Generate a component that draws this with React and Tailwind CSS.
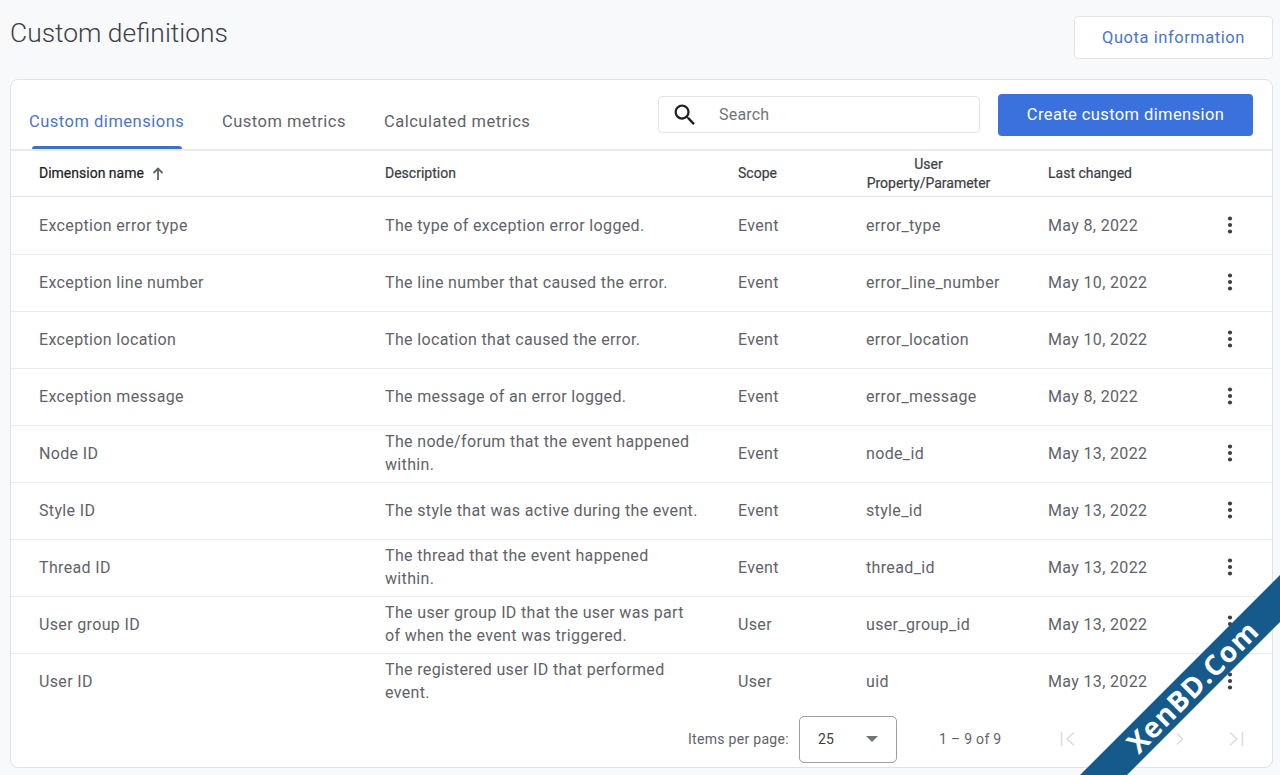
import React from "react";
import { ChevronLeft, ChevronRight } from "lucide-react";

const rows = [
  ["Exception error type", "The type of exception error logged.", "Event", "error_type", "May 8, 2022"],
  ["Exception line number", "The line number that caused the error.", "Event", "error_line_number", "May 10, 2022"],
  ["Exception location", "The location that caused the error.", "Event", "error_location", "May 10, 2022"],
  ["Exception message", "The message of an error logged.", "Event", "error_message", "May 8, 2022"],
  ["Node ID", "The node/forum that the event happened within.", "Event", "node_id", "May 13, 2022"],
  ["Style ID", "The style that was active during the event.", "Event", "style_id", "May 13, 2022"],
  ["Thread ID", "The thread that the event happened within.", "Event", "thread_id", "May 13, 2022"],
  ["User group ID", "The user group ID that the user was part of when the event was triggered.", "User", "user_group_id", "May 13, 2022"],
  ["User ID", "The registered user ID that performed event.", "User", "uid", "May 13, 2022"],
];

const grid = "grid grid-cols-[346px_353px_128px_182px_1fr_60px] items-center pl-[28px]";

function EdgeIcon({ flip }) {
  return (
    <svg width="20" height="20" viewBox="0 0 20 20" fill="none" stroke="#dadce0" strokeWidth="1.6" className={flip ? "-scale-x-100" : ""}>
      <path d="M3.5 3v14M16 3.5 9 10l7 6.5" />
    </svg>
  );
}

function MoreIcon() {
  return (
    <svg width="24" height="24" viewBox="0 0 24 24" fill="#3c4043">
      <circle cx="12" cy="5.5" r="2.1" />
      <circle cx="12" cy="12" r="2.1" />
      <circle cx="12" cy="18.5" r="2.1" />
    </svg>
  );
}

export default function App() {
  return (
    <div className="relative h-[775px] w-[1280px] overflow-hidden bg-[#f8f9fb] font-['Roboto',sans-serif] text-[#3c4043]">
      <div className="flex h-[79px] items-start justify-between pl-[10px] pr-[7px]">
        <h1 className="mt-[16px] text-[26.4px] leading-[34px] font-light text-[#3c4043]">Custom definitions</h1>
        <button className="mt-[16px] h-[43px] w-[199px] rounded-[4px] border border-[#e2e4e8] bg-white pt-[1px] text-[16.5px] tracking-[0.55px] text-[#4a76c8]">
          Quota information
        </button>
      </div>

      <div className="mr-[7px] ml-[10px] h-[689px] overflow-hidden rounded-[8px] border border-[#dfe1e5] bg-white">
        <div className="flex h-[71px] border-b-2 border-[#e8eaed]">
          <div className="flex items-end pl-[18px] text-[16.5px] tracking-[0.5px]">
            <div className="relative w-[155px] pb-[14px] whitespace-nowrap text-[#4a76c8]">
              Custom dimensions
              <span className="absolute right-[2px] bottom-0 left-[3px] h-[3px] rounded-t-[3px] bg-[#3f6fc4]" />
            </div>
            <div className="ml-[38px] pb-[14px] text-[#5f6368]">Custom metrics</div>
            <div className="ml-[38px] pb-[14px] text-[#5f6368]">Calculated metrics</div>
          </div>
          <div className="ml-auto flex items-start pt-[14px] pr-[19px]">
            <div className="mt-[2px] flex h-[37px] w-[322px] items-center rounded-[4px] border border-[#e2e4e8] pl-[12px]">
              <svg width="28" height="28" viewBox="0 0 24 24" fill="#202124">
                <path d="M15.5 14h-.79l-.28-.27A6.471 6.471 0 0 0 16 9.5 6.5 6.5 0 1 0 9.5 16c1.61 0 3.09-.59 4.23-1.57l.27.28v.79l5 4.99L20.49 19l-4.99-5zm-6 0C7.01 14 5 11.99 5 9.5S7.01 5 9.5 5 14 7.01 14 9.5 11.99 14 9.5 14z" />
              </svg>
              <span className="ml-[20px] text-[16px] tracking-[0.2px] text-[#70757a]">Search</span>
            </div>
            <button className="ml-[18px] h-[42px] w-[255px] rounded-[4px] bg-[#3a71dc] text-[16.5px] tracking-[0.4px] text-white">
              Create custom dimension
            </button>
          </div>
        </div>

        <div className={`${grid} h-[46px] border-b border-[#e3e5e8] text-[14px] font-normal text-[#3c4043] [-webkit-text-stroke:0.2px]`}>
          <div className="flex items-center gap-[6px] text-[#202124]">
            Dimension name
            <svg width="16" height="16" viewBox="0 0 16 16" fill="none" stroke="#5f6368" strokeWidth="1.8">
              <path d="M8 14V2.5M3.5 7 8 2.5 12.5 7" />
            </svg>
          </div>
          <div>Description</div>
          <div>Scope</div>
          <div className="w-[125px] text-center leading-[19px] whitespace-nowrap">User<br />Property/Parameter</div>
          <div>Last changed</div>
          <div />
        </div>

        {rows.map((r, i) => (
          <div key={r[0]} className={`${grid} h-[57px] border-t pb-[2px] text-[16px] leading-[23px] tracking-[0.35px] text-[#5f6368] ${i === 0 ? "border-transparent" : "border-[#e8eaed]"}`}>
            <div>{r[0]}</div>
            <div className="w-[315px]">{r[1]}</div>
            <div>{r[2]}</div>
            <div>{r[3]}</div>
            <div>{r[4]}</div>
            <div className="flex pl-[6px]">
              <MoreIcon />
            </div>
          </div>
        ))}

        <div className="flex h-[56px] items-center pt-[2px] text-[14px] tracking-[0.3px] text-[#5f6368]">
          <span className="ml-[677px] whitespace-nowrap">Items per page:</span>
          <div className="ml-[10px] flex h-[47px] w-[98px] items-center justify-between rounded-[5px] border border-[#9aa0a6] px-[18px] text-[#3c4043]">
            <span>25</span>
            <span className="h-0 w-0 border-x-[6px] border-t-[6px] border-x-transparent border-t-[#70757a]" />
          </div>
          <span className="ml-[42px] whitespace-nowrap">1 – 9 of 9</span>
          <div className="ml-[56px] flex items-center">
            <EdgeIcon />
            <ChevronLeft size={20} className="ml-[36px] text-[#dadce0]" />
            <ChevronRight size={20} className="ml-[36px] text-[#dadce0]" />
            <div className="ml-[36px]"><EdgeIcon flip /></div>
          </div>
        </div>
      </div>

      <svg className="absolute top-[575px] left-[1080px]" width="200" height="200" viewBox="0 0 200 200">
        <polygon points="0,200 200,0 200,47 47,200" fill="#155a8a" />
      </svg>
      <div className="absolute top-[664px] left-[1092px] w-[200px] -rotate-45 text-center font-['Open_Sans',sans-serif] text-[28px] leading-[44px] font-bold tracking-[1px] whitespace-nowrap text-white">
        XenBD.Com
      </div>
    </div>
  );
}
